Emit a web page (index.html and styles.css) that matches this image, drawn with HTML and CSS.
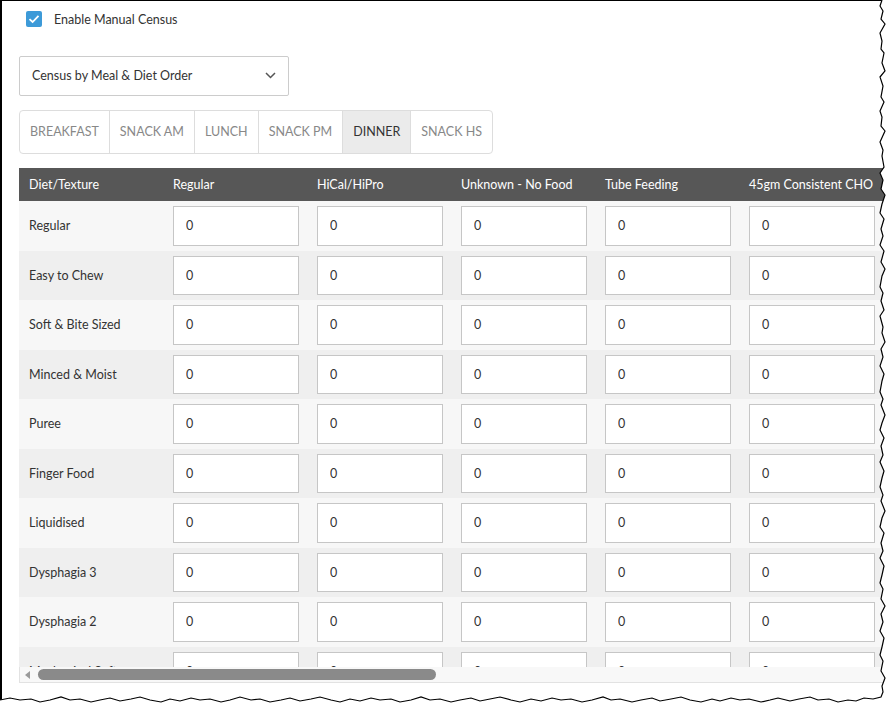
FILE: index.html
```html
<!DOCTYPE html>
<html lang="en">
<head>
<meta charset="UTF-8">
<title>Manual Census</title>
<meta name="viewport" content="width=device-width,initial-scale=1">
<link rel="stylesheet" href="styles.css">
</head>
<body>
<div class="shot">
  <div class="page">

    <label class="check">
      <span class="box">
        <svg width="12" height="10" viewBox="0 0 12 10"><path d="M1.5 5.2 L4.6 8 L10.5 1.8" fill="none" stroke="#fff" stroke-width="1.8"/></svg>
      </span>
      Enable Manual Census
    </label>

    <div class="select">
      <span>Census by Meal &amp; Diet Order</span>
      <svg width="11" height="7" viewBox="0 0 11 7"><path d="M1 1 L5.5 5.5 L10 1" fill="none" stroke="#555" stroke-width="1.5"/></svg>
    </div>

    <div class="tabs">
      <div class="tab">Breakfast</div>
      <div class="tab">Snack AM</div>
      <div class="tab">Lunch</div>
      <div class="tab">Snack PM</div>
      <div class="tab active">Dinner</div>
      <div class="tab">Snack HS</div>
    </div>

    <div class="grid-wrap">
      <div class="scroller">
        <table class="census">
          <thead>
            <tr>
              <th>Diet/Texture</th>
              <th>Regular</th>
              <th>HiCal/HiPro</th>
              <th>Unknown - No Food</th>
              <th>Tube Feeding</th>
              <th>45gm Consistent CHO</th>
              <th>60gm Consistent CHO</th>
              <th>Renal</th>
              <th>Low Fat</th>
              <th>Gluten Free</th>
              <th>Vegetarian</th>
              <th>High Fibre</th>
              <th>Low Sodium</th>
            </tr>
          </thead>
          <tbody id="rows"></tbody>
        </table>
      </div>
      <div class="hbar">
        <span class="hbar-arrow"></span>
        <span class="hbar-thumb"></span>
      </div>
    </div>

  </div>

  <svg class="tear" width="887" height="706" viewBox="0 0 887 706">
    <path class="tear-fill" d="M887 0 L882 0 L880 6 L883 11 L881 19 L885 24 L880 33 L882 41 L881 49 L884 53 L882 63 L885 71 L880 77 L883 86 L881 97 L884 102 L880 111 L882 117 L881 126 L885 131 L880 142 L883 150 L882 156 L884 167 L880 173 L883 180 L881 189 L885 195 L882 204 L880 213 L884 219 L881 229 L883 236 L880 245 L884 251 L881 262 L885 269 L882 276 L880 287 L883 293 L881 301 L884 310 L880 316 L883 327 L882 333 L885 342 L881 349 L883 357 L880 366 L884 374 L882 381 L880 392 L883 399 L881 405 L885 415 L882 423 L880 430 L884 438 L881 446 L883 455 L880 462 L884 471 L882 478 L880 487 L883 495 L881 501 L885 511 L882 518 L880 527 L884 533 L881 543 L883 551 L880 558 L884 566 L882 575 L880 583 L883 589 L881 599 L885 606 L881 614 L883 622 L880 631 L884 638 L882 647 L880 655 L883 661 L881 671 L885 678 L882 686 L883 692 L881 697 L873 699 L864 698 L856 701 L848 700 L838 702 L829 699 L818 700 L810 697 L799 699 L790 701 L778 698 L770 700 L761 702 L749 699 L740 700 L731 698 L720 701 L712 699 L701 702 L690 700 L681 697 L671 699 L660 701 L652 698 L641 700 L632 702 L620 699 L611 700 L603 697 L592 700 L582 702 L571 699 L561 700 L552 698 L541 701 L531 699 L520 702 L511 700 L500 697 L490 699 L480 701 L471 698 L460 700 L451 702 L440 699 L430 700 L421 697 L411 700 L400 702 L391 699 L380 700 L371 698 L360 701 L350 699 L340 702 L331 700 L320 697 L311 699 L300 701 L290 698 L281 700 L270 702 L260 699 L251 700 L240 697 L230 700 L221 702 L210 699 L200 700 L191 698 L180 701 L170 699 L161 702 L150 700 L140 697 L131 699 L120 701 L110 698 L100 700 L91 702 L80 699 L70 700 L61 697 L50 700 L40 702 L31 699 L20 700 L10 698 L0 700 L0 706 L887 706 Z"/>
    <polyline class="tear-line" points="882,0 880,6 883,11 881,19 885,24 880,33 882,41 881,49 884,53 882,63 885,71 880,77 883,86 881,97 884,102 880,111 882,117 881,126 885,131 880,142 883,150 882,156 884,167 880,173 883,180 881,189 885,195 882,204 880,213 884,219 881,229 883,236 880,245 884,251 881,262 885,269 882,276 880,287 883,293 881,301 884,310 880,316 883,327 882,333 885,342 881,349 883,357 880,366 884,374 882,381 880,392 883,399 881,405 885,415 882,423 880,430 884,438 881,446 883,455 880,462 884,471 882,478 880,487 883,495 881,501 885,511 882,518 880,527 884,533 881,543 883,551 880,558 884,566 882,575 880,583 883,589 881,599 885,606 881,614 883,622 880,631 884,638 882,647 880,655 883,661 881,671 885,678 882,686 883,692 881,697 873,699 864,698 856,701 848,700 838,702 829,699 818,700 810,697 799,699 790,701 778,698 770,700 761,702 749,699 740,700 731,698 720,701 712,699 701,702 690,700 681,697 671,699 660,701 652,698 641,700 632,702 620,699 611,700 603,697 592,700 582,702 571,699 561,700 552,698 541,701 531,699 520,702 511,700 500,697 490,699 480,701 471,698 460,700 451,702 440,699 430,700 421,697 411,700 400,702 391,699 380,700 371,698 360,701 350,699 340,702 331,700 320,697 311,699 300,701 290,698 281,700 270,702 260,699 251,700 240,697 230,700 221,702 210,699 200,700 191,698 180,701 170,699 161,702 150,700 140,697 131,699 120,701 110,698 100,700 91,702 80,699 70,700 61,697 50,700 40,702 31,699 20,700 10,698 0,700"/>
  </svg>
</div>

<script>
const diets = ['Regular', 'Easy to Chew', 'Soft & Bite Sized', 'Minced & Moist', 'Puree',
  'Finger Food', 'Liquidised', 'Dysphagia 3', 'Dysphagia 2', 'Mechanical Soft', 'Clear Fluids'];
const cols = 12;
document.getElementById('rows').innerHTML = diets.map(d => {
  let cells = '';
  for (let i = 0; i < cols; i++) cells += '<td><input type="text" value="0"></td>';
  return `<tr><td class="diet">${d.replace('&', '&amp;')}</td>${cells}</tr>`;
}).join('');
</script>
</body>
</html>
```

FILE: styles.css
```css
html, body {
  margin: 0;
  background: #fff;
}
body {
  font-family: Lato, "Open Sans", sans-serif;
  font-size: 12.5px;
  color: #333;
}
.shot {
  position: relative;
  width: 887px;
  height: 706px;
  overflow: hidden;
}
.page {
  box-sizing: border-box;
  height: 706px;
  border-left: 2px solid #000;
  border-top: 1px solid #000;
  padding: 10px 0 0 17px;
  overflow: hidden;
}

.check {
  display: flex;
  align-items: center;
  gap: 12px;
  margin-left: 7px;
  height: 16px;
}
.box {
  width: 16px;
  height: 16px;
  border-radius: 2px;
  background: #3d9ad8;
  display: flex;
  align-items: center;
  justify-content: center;
}

.select {
  box-sizing: border-box;
  width: 270px;
  height: 40px;
  margin-top: 29px;
  border: 1px solid #ccc;
  border-radius: 2px;
  padding: 0 12px 1px;
  display: flex;
  align-items: center;
  justify-content: space-between;
}

.tabs {
  display: inline-flex;
  margin-top: 14px;
  height: 44px;
  box-sizing: border-box;
  border: 1px solid #ddd;
  border-radius: 4px;
  overflow: hidden;
}
.tab {
  display: flex;
  align-items: center;
  padding: 0 10px 1px;
  text-transform: uppercase;
  color: #888;
  border-left: 1px solid #ddd;
}
.tab:first-child {
  border-left: none;
}
.tab.active {
  background: #ebebeb;
  color: #333;
}

.grid-wrap {
  margin-top: 14px;
  width: 880px;
  border-bottom: 1px solid #e2e2e2;
}
.scroller {
  height: 499px;
  overflow: hidden;
}
.hbar {
  height: 15px;
  box-sizing: border-box;
  background: #f8f8f8;
  border-left: 1px solid #e2e2e2;
  display: flex;
  align-items: center;
}
.hbar-arrow {
  width: 0;
  height: 0;
  margin-left: 5px;
  border-top: 4px solid transparent;
  border-bottom: 4px solid transparent;
  border-right: 5px solid #9a9a9a;
}
.hbar-thumb {
  width: 398px;
  height: 11px;
  margin-left: 8px;
  border-radius: 6px;
  background: #8a8a8a;
}

.census {
  border-collapse: collapse;
  table-layout: fixed;
  width: 1872px;
}
.census th {
  width: 144px;
  height: 33px;
  box-sizing: border-box;
  background: #575757;
  color: #fff;
  font-weight: normal;
  text-align: left;
  padding: 0 10px 1px;
  white-space: nowrap;
}
.census td {
  padding: 5px 8px 5px 10px;
  height: 39.5px;
}
.census tbody tr:nth-child(odd) {
  background: #f7f7f7;
}
.census tbody tr:nth-child(even) {
  background: #efefef;
}
.census input {
  box-sizing: border-box;
  width: 126px;
  height: 39.5px;
  display: block;
  border: 1px solid #c6c6c6;
  background: #fff;
  padding: 0 12px;
  font: inherit;
  color: #333;
}

.tear {
  position: absolute;
  left: 0;
  top: 0;
}
.tear-fill {
  fill: #fff;
}
.tear-line {
  fill: none;
  stroke: #000;
  stroke-width: 1.2;
}
```
